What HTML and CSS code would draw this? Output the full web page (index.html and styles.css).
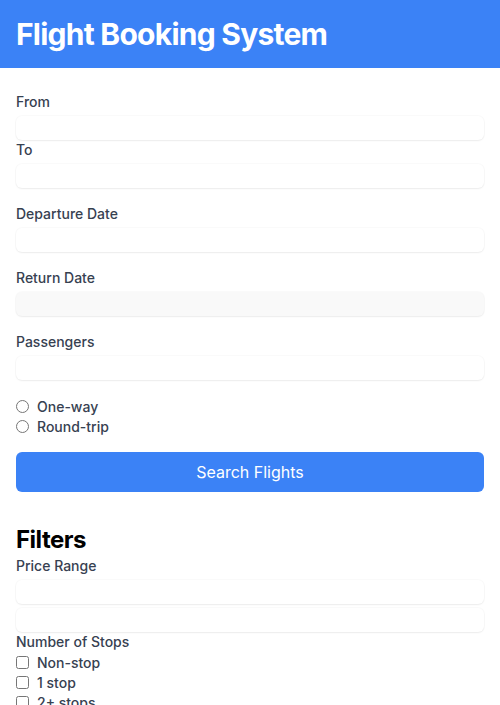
FILE: index.html
```html
<!DOCTYPE html>
<html lang="en">
<head>
<meta charset="utf-8">
<title>Flight Booking System</title>
<link rel="stylesheet" href="styles.css">
</head>
<body>
<header class="topbar">
  <h1 class="title">Flight Booking System</h1>
</header>
<main class="content">
  <form class="search-form">
    <div class="field field-tight">
      <label class="label" for="from">From</label>
      <input class="input" id="from" type="text">
    </div>
    <div class="field">
      <label class="label" for="to">To</label>
      <input class="input" id="to" type="text">
    </div>
    <div class="field">
      <label class="label" for="dep">Departure Date</label>
      <input class="input" id="dep" type="text">
    </div>
    <div class="field">
      <label class="label" for="ret">Return Date</label>
      <input class="input input-disabled" id="ret" type="text" disabled>
    </div>
    <div class="field">
      <label class="label" for="pax">Passengers</label>
      <input class="input" id="pax" type="text">
    </div>
    <div class="field options">
      <label class="option"><input class="radio" type="radio" name="trip"><span>One-way</span></label>
      <label class="option"><input class="radio" type="radio" name="trip"><span>Round-trip</span></label>
    </div>
    <button class="btn" type="button">Search Flights</button>
  </form>
  <section class="filters">
    <h2 class="filters-title">Filters</h2>
    <div class="filter-group">
      <div class="label">Price Range</div>
      <input class="input" type="text">
      <input class="input input-second" type="text">
    </div>
    <div class="filter-group">
      <div class="label label-flat">Number of Stops</div>
      <label class="option"><input class="check" type="checkbox"><span>Non-stop</span></label>
      <label class="option"><input class="check" type="checkbox"><span>1 stop</span></label>
      <label class="option"><input class="check" type="checkbox"><span>2+ stops</span></label>
    </div>
  </section>
</main>
</body>
</html>
```
FILE: styles.css
```css
* { box-sizing: border-box; }
html, body {
  margin: 0;
  padding: 0;
  background: #ffffff;
  font-family: Inter, "Liberation Sans", sans-serif;
  color: #374151;
}
.topbar {
  background: #3b82f6;
  padding: 16px;
}
.title {
  margin: 0;
  font-size: 30px;
  line-height: 36px;
  font-weight: 700;
  letter-spacing: -0.75px;
  color: #ffffff;
}
.content {
  padding: 24px 16px 16px;
}
.search-form {
  display: flex;
  flex-direction: column;
}
.field {
  margin-bottom: 16px;
}
.field-tight {
  margin-bottom: 0;
}
.label {
  display: block;
  font-size: 14px;
  line-height: 20px;
  font-weight: 500;
  color: #374151;
  margin-bottom: 4px;
}
.label-flat {
  margin-bottom: 0;
}
.input {
  display: block;
  width: 100%;
  height: 24px;
  border: none;
  border-radius: 6px;
  background: #ffffff;
  box-shadow: 0 0 0 1px rgba(0,0,0,0.02), 0 1px 2px rgba(0,0,0,0.06);
  font: inherit;
  outline: none;
}
.input-disabled {
  background: #f9f9f9;
}
.input-second {
  margin-top: 4px;
}
.options {
  display: flex;
  flex-direction: column;
}
.option {
  display: flex;
  align-items: center;
  height: 20px;
  font-size: 14px;
  font-weight: 500;
  color: #374151;
}
.radio, .check {
  margin: 0 8px 0 0;
  width: 13px;
  height: 13px;
}
.btn {
  width: 100%;
  height: 40px;
  border: none;
  border-radius: 6px;
  background: #3b82f6;
  color: #ffffff;
  font-family: inherit;
  font-size: 16px;
  font-weight: 400;
  cursor: pointer;
}
.filters {
  margin-top: 32px;
}
.filters-title {
  margin: 0;
  font-size: 24px;
  line-height: 32px;
  font-weight: 700;
  letter-spacing: -0.5px;
  color: #000000;
}
.filter-group {
  display: flex;
  flex-direction: column;
}
```
